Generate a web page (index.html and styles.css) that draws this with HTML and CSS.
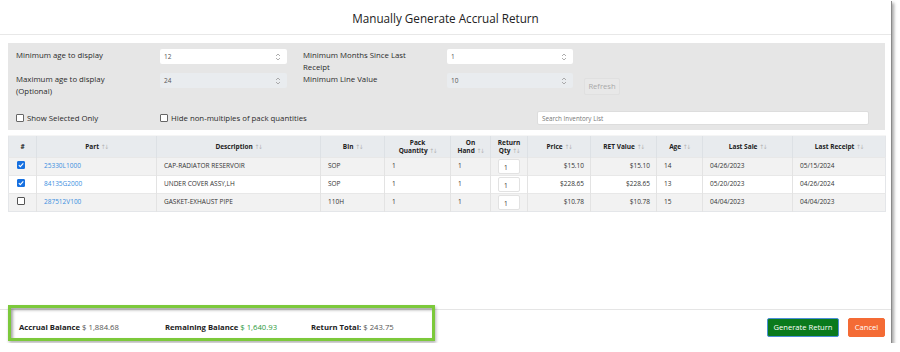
FILE: index.html
```html
<!DOCTYPE html>
<html>
<head>
<meta charset="utf-8">
<link rel="stylesheet" href="styles.css">
</head>
<body>
<div class="modal">
  <div class="modal-header"><h1 class="title">Manually Generate Accrual Return</h1></div>
  <div class="modal-body">
    <div class="filters">
      <div class="grid">
        <div class="label">Minimum age to display</div>
        <div class="field"><span>12</span><svg class="spin" width="6" height="8" viewBox="0 0 6 8"><path d="M1 3 L3 1 L5 3 M1 5 L3 7 L5 5" fill="none" stroke="#999" stroke-width="0.8"/></svg></div>
        <div class="label label-2">Minimum Months Since Last<br>Receipt</div>
        <div class="field"><span>1</span><svg class="spin" width="6" height="8" viewBox="0 0 6 8"><path d="M1 3 L3 1 L5 3 M1 5 L3 7 L5 5" fill="none" stroke="#999" stroke-width="0.8"/></svg></div>
        <div></div>
        <div class="label">Maximum age to display<br>(Optional)</div>
        <div class="field disabled"><span>24</span><svg class="spin" width="6" height="8" viewBox="0 0 6 8"><path d="M1 3 L3 1 L5 3 M1 5 L3 7 L5 5" fill="none" stroke="#999" stroke-width="0.8"/></svg></div>
        <div class="label label-2">Minimum Line Value</div>
        <div class="field disabled"><span>10</span><svg class="spin" width="6" height="8" viewBox="0 0 6 8"><path d="M1 3 L3 1 L5 3 M1 5 L3 7 L5 5" fill="none" stroke="#999" stroke-width="0.8"/></svg></div>
        <div class="refresh-cell"><button class="refresh">Refresh</button></div>
      </div>
      <div class="checks">
        <label class="check check-1"><span class="box"></span>Show Selected Only</label>
        <label class="check"><span class="box"></span>Hide non-multiples of pack quantities</label>
        <div class="search">Search Inventory List</div>
      </div>
    </div>
    <table class="grid-table">
      <colgroup>
        <col style="width:28px"><col style="width:120px"><col style="width:164px"><col style="width:64px"><col style="width:66px"><col style="width:40px"><col style="width:37px"><col style="width:63px"><col style="width:66px"><col style="width:46px"><col style="width:90px"><col style="width:93px">
      </colgroup>
      <thead>
        <tr>
          <th>#</th>
          <th>Part <span class="sort">↑↓</span></th>
          <th>Description <span class="sort">↑↓</span></th>
          <th>Bin <span class="sort">↑↓</span></th>
          <th>Pack<br>Quantity <span class="sort">↑↓</span></th>
          <th>On<br>Hand <span class="sort">↑↓</span></th>
          <th>Return<br>Qty <span class="sort">↑↓</span></th>
          <th>Price <span class="sort">↑↓</span></th>
          <th>RET Value <span class="sort">↑↓</span></th>
          <th>Age <span class="sort">↑↓</span></th>
          <th>Last Sale <span class="sort">↑↓</span></th>
          <th>Last Receipt <span class="sort">↑↓</span></th>
        </tr>
      </thead>
      <tbody>
        <tr class="odd">
          <td class="c-check"><span class="cb checked"><svg width="8" height="8" viewBox="0 0 8 8"><path d="M1.8 4.2 L3.3 5.7 L6.3 2.4" fill="none" stroke="#fff" stroke-width="1.1"/></svg></span></td>
          <td><a class="link">25330L1000</a></td>
          <td>CAP-RADIATOR RESERVOIR</td>
          <td>SOP</td><td>1</td><td>1</td>
          <td class="c-qty"><span class="qty">1</span></td>
          <td class="num">$15.10</td><td class="num">$15.10</td>
          <td>14</td><td>04/26/2023</td><td>05/15/2024</td>
        </tr>
        <tr>
          <td class="c-check"><span class="cb checked"><svg width="8" height="8" viewBox="0 0 8 8"><path d="M1.8 4.2 L3.3 5.7 L6.3 2.4" fill="none" stroke="#fff" stroke-width="1.1"/></svg></span></td>
          <td><a class="link">84135G2000</a></td>
          <td>UNDER COVER ASSY,LH</td>
          <td>SOP</td><td>1</td><td>1</td>
          <td class="c-qty"><span class="qty">1</span></td>
          <td class="num">$228.65</td><td class="num">$228.65</td>
          <td>13</td><td>05/20/2023</td><td>04/26/2024</td>
        </tr>
        <tr class="odd">
          <td class="c-check"><span class="cb"></span></td>
          <td><a class="link">287512V100</a></td>
          <td>GASKET-EXHAUST PIPE</td>
          <td>110H</td><td>1</td><td>1</td>
          <td class="c-qty"><span class="qty">1</span></td>
          <td class="num">$10.78</td><td class="num">$10.78</td>
          <td>15</td><td>04/04/2023</td><td>04/04/2023</td>
        </tr>
      </tbody>
    </table>
  </div>
  <div class="modal-footer">
    <div class="totals">
      <div class="total"><b>Accrual Balance</b> <span class="amt">$ 1,884.68</span></div>
      <div class="total"><b>Remaining Balance</b> <span class="amt green">$ 1,640.93</span></div>
      <div class="total"><b>Return Total:</b> <span class="amt">$ 243.75</span></div>
    </div>
    <div class="buttons">
      <button class="btn btn-generate">Generate Return</button>
      <button class="btn btn-cancel">Cancel</button>
    </div>
  </div>
  <div class="highlight"></div>
</div>
</body>
</html>
```

FILE: styles.css
```css
* { box-sizing: border-box; }
html, body { margin: 0; padding: 0; background: #fff; }
body { font-family: "Open Sans", "Noto Sans", sans-serif; color: #222; }

.modal {
  position: relative;
  width: 891px;
  height: 343px;
  background: #fff;
  display: flex;
  flex-direction: column;
  box-shadow: 1px 1px 0 #8a8a8a, 3px 3px 3px rgba(0,0,0,0.35);
}

.modal-header {
  height: 35px;
  border-bottom: 1px solid #e8e8e8;
  display: flex;
  align-items: center;
  justify-content: center;
}
.title {
  margin: 0;
  font-weight: 400;
  font-size: 11.7px;
  color: #222;
  padding-top: 1px;
}

.modal-body {
  flex: 1;
  padding: 8px 6px 0 8px;
}

.filters {
  background: #e6e6e6;
  padding: 6px 16px 5px 8px;
}
.grid {
  display: grid;
  grid-template-columns: 144px 127px 160px 126px 47px;
  grid-auto-rows: 24px;
  align-items: start;
}
.label {
  font-size: 7.8px;
  line-height: 12px;
  color: #2a2a2a;
}
.label-2 { padding-left: 16px; }
.field {
  height: 15px;
  background: #fff;
  border-radius: 2px;
  display: flex;
  align-items: center;
  justify-content: space-between;
  padding: 0 6px 0 4px;
  font-size: 6.5px;
  color: #555;
}
.field.disabled { background: #e9ecef; }
.spin { display: block; }
.refresh-cell { padding-left: 11px; margin-top: -1px; }
.refresh {
  width: 36px;
  height: 17px;
  padding: 0;
  font-family: inherit;
  font-size: 7.6px;
  color: #a8a8a8;
  background: #e8e8e8;
  border: 1px solid #e0e0e0;
  border-radius: 2px;
}

.checks {
  margin-top: 14px;
  height: 14px;
  display: flex;
  align-items: center;
}
.check {
  display: flex;
  align-items: center;
  font-size: 7.8px;
  color: #2a2a2a;
}
.check-1 { width: 144px; }
.box {
  width: 8px;
  height: 8px;
  border: 1px solid #666;
  border-radius: 1px;
  background: #fff;
  margin-right: 3px;
}
.search {
  margin-left: auto;
  width: 332px;
  height: 14px;
  background: #fff;
  border: 1px solid #ddd;
  border-radius: 2px;
  font-size: 6.3px;
  color: #777;
  padding-left: 4px;
  display: flex;
  align-items: center;
}

.grid-table {
  margin-top: 5px;
  width: 877px;
  table-layout: fixed;
  border-collapse: collapse;
  font-size: 6.5px;
  color: #333;
  border: 1px solid #e4e6e9;
}
.grid-table th {
  background: #e8ebee;
  height: 22px;
  font-weight: 700;
  color: #222;
  text-align: center;
  vertical-align: middle;
  line-height: 8px;
  border-left: 1px solid #dde1e5;
  border-top: 1px solid #f5f5f5;
  padding: 0 4px;
}
.grid-table th:first-child { border-left: none; }
.sort {
  font-family: "DejaVu Sans", sans-serif;
  color: #b4b4b4;
  font-weight: 400;
  font-size: 6px;
  letter-spacing: -1.5px;
}
.grid-table td {
  height: 18px;
  padding: 3px 6px 0 7px;
  vertical-align: top;
  line-height: 9px;
  border-left: 1px solid #e3e3e3;
  border-top: 1px solid #e8e8e8;
  white-space: nowrap;
}
.grid-table td:first-child { border-left: none; }
.grid-table tr.odd td { background: #f2f2f2; }
.grid-table td.num { text-align: right; }
.link { color: #3a8ee0; }
.c-check { padding-left: 8px !important; }
.cb {
  display: block;
  width: 8px;
  height: 8px;
  border: 1px solid #555;
  border-radius: 1px;
  background: #fff;
}
.cb.checked { background: #1670e0; border-color: #1670e0; }
.cb svg { display: block; margin: -1px 0 0 -1px; }
.grid-table td.c-qty { padding: 1px 0 0 7px; }
.qty {
  display: block;
  width: 22px;
  height: 15px;
  background: #fff;
  border: 1px solid #e2e2e2;
  border-radius: 2px;
  padding: 4px 0 0 5px;
  line-height: 7px;
}

.modal-footer {
  height: 34px;
  border-top: 1px solid #e5e5e5;
  display: flex;
  align-items: center;
  justify-content: space-between;
  padding: 0 6px 0 19px;
}
.totals { display: flex; font-size: 7.7px; }
.total { width: 146px; color: #222; }
.total b { font-weight: 700; }
.amt { color: #555; }
.amt.green { color: #2a9a3c; }
.buttons { display: flex; gap: 9px; margin-top: 1px; }
.btn {
  height: 19px;
  font-family: inherit;
  font-size: 7.6px;
  color: #fff;
  border-radius: 2px;
  padding: 0;
}
.btn-generate { width: 72px; background: #0a7a1c; border: 1px solid #4a8fd6; }
.btn-cancel { width: 37px; background: #f46b35; border: 1px solid #f46b35; }

.highlight {
  position: absolute;
  left: 8px;
  top: 305px;
  width: 427px;
  height: 36px;
  border: 3px solid #7cc93b;
  box-shadow: inset 2px 2px 3px rgba(0,0,0,0.35), 1px 2px 3px rgba(0,0,0,0.3);
  pointer-events: none;
}
```
